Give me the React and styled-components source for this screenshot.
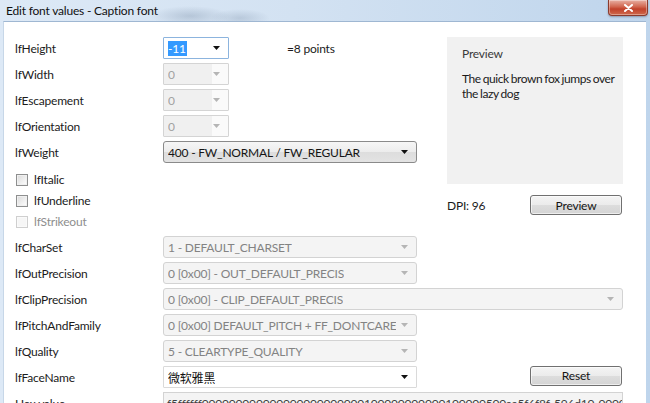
import React from "react";
import styled, { createGlobalStyle } from "styled-components";

const GlobalStyle = createGlobalStyle`
  html, body {
    margin: 0;
    padding: 0;
    width: 650px;
    height: 403px;
    overflow: hidden;
  }
  body {
    font-family: Lato, "Open Sans", "Noto Sans CJK SC", sans-serif;
    font-size: 12px;
    letter-spacing: -0.2px;
    color: #1b1b1b;
  }
`;

const Window = styled.div`
  width: 650px;
  height: 403px;
  display: flex;
  flex-direction: column;
  background:
    radial-gradient(ellipse 40px 10px at 190px 16px, rgba(120, 140, 165, 0.35), transparent),
    radial-gradient(ellipse 30px 9px at 240px 18px, rgba(120, 140, 165, 0.3), transparent),
    linear-gradient(to right, #dde9f6 0%, #d3e2f2 45%, #bfd5ec 100%);
`;

const TitleBar = styled.div`
  height: 21px;
  display: flex;
  align-items: center;
  justify-content: space-between;
  padding-left: 6px;
  font-size: 12px;
  color: #111;
`;

const CloseButton = styled.div`
  align-self: flex-start;
  width: 38px;
  height: 15px;
  margin-right: 2px;
  display: flex;
  align-items: center;
  justify-content: center;
  border: 1px solid #8b3a2c;
  border-top: none;
  border-radius: 0 0 4px 4px;
  background: linear-gradient(#e8b0a4 0%, #d1664f 45%, #c1412b 60%, #cf6a4d 100%);
  box-shadow: inset 0 0 0 1px rgba(255, 255, 255, 0.35), 0 1px 2px rgba(60, 60, 80, 0.4);
`;

const Client = styled.div`
  flex: 1;
  margin: 0 4px 0 3px;
  background: #fff;
  border-top: 1px solid #9fb7d2;
  border-left: 1px solid #c7d7e8;
  overflow: hidden;
`;

const Form = styled.div`
  display: grid;
  grid-template-columns: 148px 254px 30px 176px;
  grid-template-rows: repeat(5, 26px) 25px 21px 23px repeat(7, 26px);
  padding: 13px 0 0 11px;
`;

const Label = styled.div`
  grid-column: 1;
  align-self: center;
  color: ${(p) => (p.$disabled ? "#8e8e8e" : "#1b1b1b")};
  white-space: nowrap;
`;

const Cell = styled.div`
  grid-column: ${(p) => (p.$wide ? "2 / span 3" : "2")};
  display: flex;
  align-items: center;
`;

const Combo = styled.div`
  box-sizing: border-box;
  width: ${(p) => p.$w}px;
  height: 22px;
  display: flex;
  align-items: center;
  justify-content: space-between;
  gap: 4px;
  padding: 0 8px 0 4px;
  white-space: nowrap;
  overflow: hidden;
  border: 1px solid;
  border-radius: ${(p) => (p.$kind === "list" || p.$kind === "listOff" ? "3px" : "1px")};
  ${(p) =>
    p.$kind === "focus" &&
    `border-color: #8cb4de; background: #fff; color: #111;`}
  ${(p) =>
    p.$kind === "edit" &&
    `border-color: #dadada; background: #fff; color: #111;`}
  ${(p) =>
    p.$kind === "editOff" &&
    `border-color: #d4d4d4; color: #a2a2a2;
     background: linear-gradient(to right, #f0f0f0 0, #f0f0f0 calc(100% - 16px), #fafafa calc(100% - 16px));`}
  ${(p) =>
    p.$kind === "list" &&
    `border-color: #8a8a8a; color: #151515;
     background: linear-gradient(#f6f6f6 0%, #ececec 50%, #dddddd 51%, #e3e3e3 100%);`}
  ${(p) =>
    p.$kind === "listOff" &&
    `border-color: #d3d3d3; background: #f4f4f4; color: #838383;`}
`;

const ComboText = styled.span`
  min-width: 0;
  overflow: hidden;
`;

const Selected = styled.span`
  background: #3399ff;
  color: #fff;
  padding: 0 1px;
  margin-left: -1px;
`;

const Points = styled.span`
  margin-left: 58px;
  color: #1b1b1b;
`;

const HexField = styled.div`
  box-sizing: border-box;
  width: 461px;
  height: 22px;
  display: flex;
  align-items: center;
  padding-left: 3px;
  border: 1px solid #d3d3d3;
  background: #f4f4f4;
  color: #3f3f3f;
  white-space: nowrap;
  overflow: hidden;
`;

const CheckRow = styled.label`
  grid-column: 1 / span 2;
  align-self: ${(p) => p.$align || "center"};
  height: 21px;
  display: flex;
  align-items: center;
  gap: 6px;
  padding-left: 1px;
  color: ${(p) => (p.$disabled ? "#8e8e8e" : "#1b1b1b")};
`;

const Box = styled.span`
  box-sizing: border-box;
  width: 12px;
  height: 12px;
  border: 1px solid ${(p) => (p.$disabled ? "#cfcfcf" : "#8e8f8f")};
  background: ${(p) =>
    p.$disabled ? "#f6f6f6" : "linear-gradient(135deg, #d9d9d9, #f4f4f4 70%, #fff)"};
  box-shadow: inset 0 0 0 1px ${(p) => (p.$disabled ? "#fafafa" : "#f0f0f0")};
`;

const PreviewPanel = styled.div`
  grid-column: 4;
  grid-row: 1 / span 6;
  align-self: start;
  margin-top: 2px;
  height: 147px;
  box-sizing: border-box;
  padding: 9px 0 0 15px;
  background: #f1f1f1;
  line-height: 15px;
`;

const PanelTitle = styled.div`
  color: #3a3a3a;
  margin-bottom: 10px;
`;

const SampleText = styled.div`
  letter-spacing: -0.45px;
  word-spacing: -0.5px;
`;

const DpiBar = styled.div`
  grid-column: 4;
  grid-row: 7 / span 2;
  align-self: start;
  margin-top: 5px;
  display: flex;
  align-items: center;
  justify-content: space-between;
  padding-right: 1px;
`;

const ResetSlot = styled.div`
  grid-column: 4;
  grid-row: 14;
  display: flex;
  justify-content: flex-end;
  align-items: center;
  padding-right: 1px;
  margin-top: -3px;
`;

const Button = styled.button`
  width: 92px;
  height: 20px;
  padding: 0;
  font: inherit;
  letter-spacing: inherit;
  color: #151515;
  border: 1px solid #707070;
  border-radius: 3px;
  background: linear-gradient(#f4f4f4 0%, #ebebeb 50%, #dddddd 51%, #d4d4d4 100%);
  box-shadow: inset 0 0 0 1px rgba(255, 255, 255, 0.6);
`;

function Arrow({ off }) {
  return (
    <svg width="7" height="4" viewBox="0 0 7 4" style={{ flex: "none" }}>
      <path d="M0 0 L7 0 L3.5 4 Z" fill={off ? "#b5b5b5" : "#111"} />
    </svg>
  );
}

function Row({ label, children, wide }) {
  return (
    <>
      <Label>{label}</Label>
      <Cell $wide={wide}>{children}</Cell>
    </>
  );
}

function DropDown({ kind, w, children }) {
  const off = kind === "editOff" || kind === "listOff";
  return (
    <Combo $kind={kind} $w={w}>
      <ComboText>{children}</ComboText>
      <Arrow off={off} />
    </Combo>
  );
}

function Check({ label, disabled, align }) {
  return (
    <CheckRow $disabled={disabled} $align={align}>
      <Box $disabled={disabled} />
      {label}
    </CheckRow>
  );
}

export default function App() {
  return (
    <>
      <GlobalStyle />
      <Window>
        <TitleBar>
          <span>Edit font values - Caption font</span>
          <CloseButton>
            <svg width="9" height="8" viewBox="0 0 9 8">
              <path d="M1 1 L8 7 M8 1 L1 7" stroke="#fff" strokeWidth="2" strokeLinecap="round" />
            </svg>
          </CloseButton>
        </TitleBar>
        <Client>
          <Form>
            <PreviewPanel>
              <PanelTitle>Preview</PanelTitle>
              <SampleText>The quick brown fox jumps over the lazy dog</SampleText>
            </PreviewPanel>
            <DpiBar>
              <span>DPI: 96</span>
              <Button>Preview</Button>
            </DpiBar>
            <ResetSlot>
              <Button>Reset</Button>
            </ResetSlot>

            <Row label="lfHeight">
              <DropDown kind="focus" w={66}>
                <Selected>-11</Selected>
              </DropDown>
              <Points>=8 points</Points>
            </Row>
            <Row label="lfWidth">
              <DropDown kind="editOff" w={66}>0</DropDown>
            </Row>
            <Row label="lfEscapement">
              <DropDown kind="editOff" w={66}>0</DropDown>
            </Row>
            <Row label="lfOrientation">
              <DropDown kind="editOff" w={66}>0</DropDown>
            </Row>
            <Row label="lfWeight">
              <DropDown kind="list" w={254}>400 - FW_NORMAL / FW_REGULAR</DropDown>
            </Row>

            <Check label="lfItalic" align="end" />
            <Check label="lfUnderline" />
            <Check label="lfStrikeout" disabled align="start" />

            <Row label="lfCharSet">
              <DropDown kind="listOff" w={254}>1 - DEFAULT_CHARSET</DropDown>
            </Row>
            <Row label="lfOutPrecision">
              <DropDown kind="listOff" w={254}>0 [0x00] - OUT_DEFAULT_PRECIS</DropDown>
            </Row>
            <Row label="lfClipPrecision" wide>
              <DropDown kind="listOff" w={461}>0 [0x00] - CLIP_DEFAULT_PRECIS</DropDown>
            </Row>
            <Row label="lfPitchAndFamily">
              <DropDown kind="listOff" w={254}>0 [0x00] DEFAULT_PITCH + FF_DONTCARE</DropDown>
            </Row>
            <Row label="lfQuality">
              <DropDown kind="listOff" w={254}>5 - CLEARTYPE_QUALITY</DropDown>
            </Row>
            <Row label="lfFaceName">
              <DropDown kind="edit" w={254}>微软雅黑</DropDown>
            </Row>
            <Row label="Hex value" wide>
              <HexField>
                f5ffffff000000000000000000000000100000000000100000500aa5f6f8f-596d10-00000000
              </HexField>
            </Row>
          </Form>
        </Client>
      </Window>
    </>
  );
}
